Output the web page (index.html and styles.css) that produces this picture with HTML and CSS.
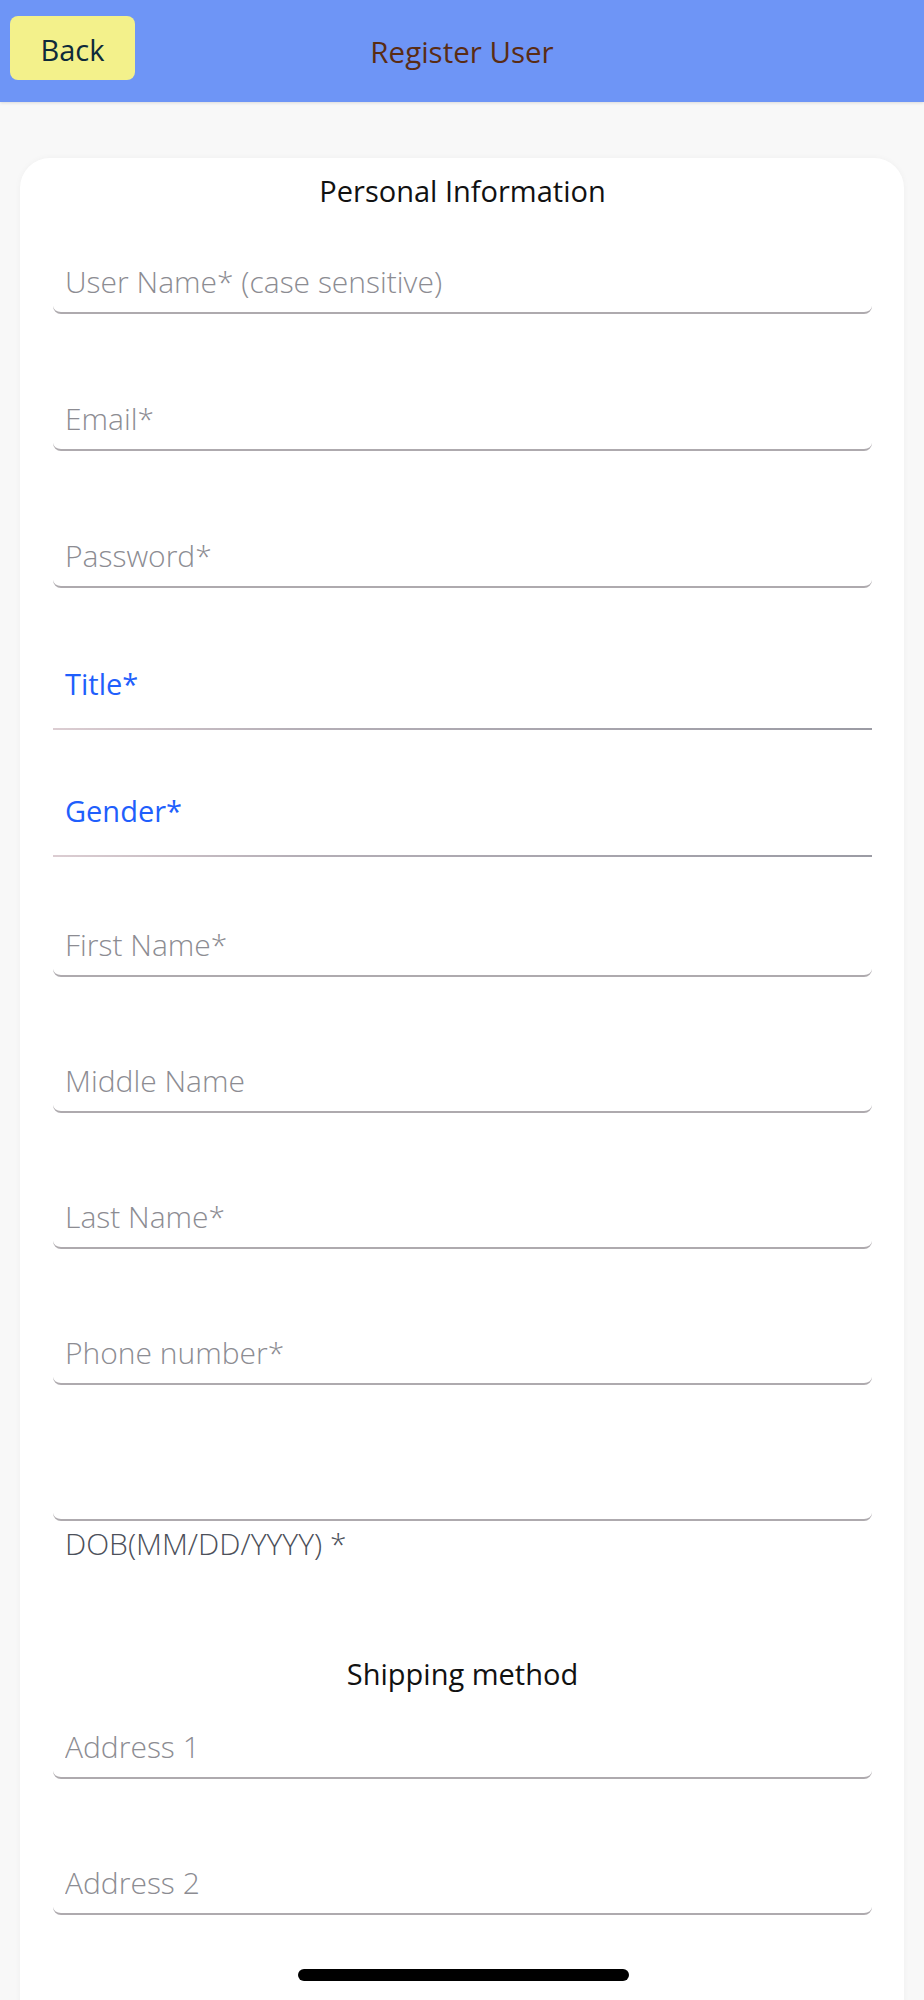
FILE: index.html
```html
<!doctype html>
<html lang="en">
<head>
    <meta charset="UTF-8">
    <title>Register User</title>
    <link rel="stylesheet" href="styles.css">
</head>
<body>

<header class="topbar">
    <button class="back-btn" type="button">Back</button>
    <h1 class="topbar-title">Register User</h1>
    <span></span>
</header>

<main class="card">
    <h2 class="section-title">Personal Information</h2>

    <input class="field first" type="text" placeholder="User Name* (case sensitive)">
    <input class="field" type="email" placeholder="Email*">
    <input class="field" type="password" placeholder="Password*">

    <div class="picker title-picker">Title*</div>
    <div class="picker gender-picker">Gender*</div>

    <input class="field after-picker" type="text" placeholder="First Name*">
    <input class="field" type="text" placeholder="Middle Name">
    <input class="field" type="text" placeholder="Last Name*">
    <input class="field" type="tel" placeholder="Phone number*">
    <input class="field" type="text">
    <label class="dob-label">DOB(MM/DD/YYYY) *</label>

    <h2 class="section-title shipping">Shipping method</h2>

    <input class="field after-heading" type="text" placeholder="Address 1">
    <input class="field" type="text" placeholder="Address 2">
</main>

<div class="home-bar"></div>

</body>
</html>
```

FILE: styles.css
```css
body {
    margin: 0;
    background: #f8f8f8;
    font-family: "Open Sans", "Liberation Sans", sans-serif;
    position: relative;
    min-height: 2000px;
}

/* top bar */
.topbar {
    display: grid;
    grid-template-columns: 1fr auto 1fr;
    height: 102px;
    padding: 0 10px;
    background: #6e95f6;
    box-shadow: 0 1px 3px rgba(0, 0, 0, 0.12);
}
.back-btn {
    justify-self: start;
    align-self: start;
    margin-top: 16px;
    width: 125px;
    height: 64px;
    padding: 3px 0 0;
    border: none;
    border-radius: 8px;
    background: #f3f18b;
    color: #0e2a3a;
    font-family: inherit;
    font-size: 29px;
    line-height: 40px;
}
.topbar-title {
    align-self: center;
    margin: 0;
    padding-top: 2px;
    color: #5a2c14;
    font-size: 29.5px;
    font-weight: 400;
    line-height: 40px;
}

/* card */
.card {
    margin: 56px 20px 0;
    padding: 13px 32px 90px 33px;
    background: #fff;
    border-radius: 30px 30px 0 0;
    box-shadow: 0 0 6px rgba(0, 0, 0, 0.04);
}
.section-title {
    margin: 0;
    color: #111;
    font-size: 29px;
    font-weight: 400;
    line-height: 40px;
    text-align: center;
}
.section-title.shipping {
    margin-top: 90px;
}

/* inputs */
.field {
    display: block;
    box-sizing: border-box;
    width: 100%;
    height: 64px;
    margin: 73px 0 0;
    padding: 0 12px;
    border: none;
    border-bottom: 2px solid #aeaaae;
    border-radius: 0 0 8px 8px;
    background: transparent;
    color: #333;
    font-family: inherit;
    font-size: 30px;
    font-weight: 300;
    outline: none;
}
.field::placeholder {
    color: #8c8c92;
    font-weight: 300;
}
.field.first {
    margin-top: 39px;
}
.field.after-picker {
    margin-top: 56px;
}
.field.after-heading {
    margin-top: 21px;
}
.field + .field {
    margin-top: 72px;
}
.field.first + .field,
.field.first + .field + .field {
    margin-top: 73px;
}

.picker {
    padding: 30px 12px 26px;
    background: linear-gradient(to right, #dccdd2, #b4aeb6 30%, #9b9ba4) left bottom / 100% 2px no-repeat;
    color: #1f5ffc;
    font-size: 29px;
    line-height: 40px;
}
.title-picker {
    margin-top: 46px;
}
.gender-picker {
    margin-top: 31px;
}

.dob-label {
    display: block;
    margin-top: 3px;
    padding-left: 12px;
    color: #4c505a;
    font-size: 30px;
    font-weight: 300;
    line-height: 40px;
}

/* iOS home indicator */
.home-bar {
    position: absolute;
    top: 1969px;
    left: 298px;
    width: 331px;
    height: 12px;
    border-radius: 6px;
    background: #000;
}
```
